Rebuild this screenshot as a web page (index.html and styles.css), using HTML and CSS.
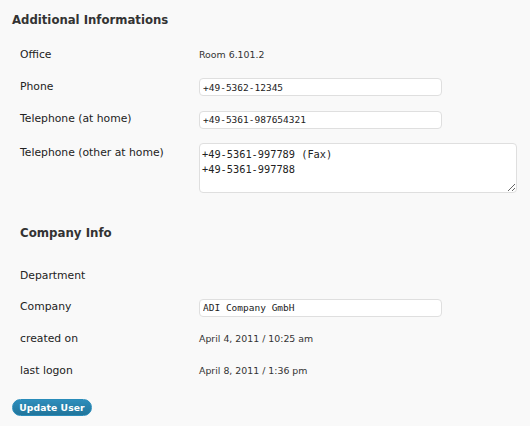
FILE: index.html
```html
<!DOCTYPE html>
<html>
<head>
<meta charset="utf-8">
<link rel="stylesheet" href="styles.css">
</head>
<body>
<div class="page">
  <h2 class="title">Additional Informations</h2>
  <div class="form">
    <div class="row r-office"><div class="label">Office</div><div class="value text">Room 6.101.2</div></div>
    <div class="row r-input"><div class="label">Phone</div><div class="value"><input class="field" type="text" value="+49-5362-12345"></div></div>
    <div class="row r-input"><div class="label">Telephone (at home)</div><div class="value"><input class="field" type="text" value="+49-5361-987654321"></div></div>
    <div class="row r-area"><div class="label">Telephone (other at home)</div><div class="value"><textarea class="area">+49-5361-997789 (Fax)
+49-5361-997788</textarea></div></div>
  </div>
  <h3 class="subtitle">Company Info</h3>
  <div class="form">
    <div class="row r-dept"><div class="label">Department</div><div class="value text"></div></div>
    <div class="row r-comp"><div class="label">Company</div><div class="value"><input class="field" type="text" value="ADI Company GmbH"></div></div>
    <div class="row r-created"><div class="label">created on</div><div class="value text">April 4, 2011 / 10:25 am</div></div>
    <div class="row r-logon"><div class="label">last logon</div><div class="value text">April 8, 2011 / 1:36 pm</div></div>
  </div>
  <div class="actions"><button class="btn" type="button">Update User</button></div>
</div>
</body>
</html>
```
FILE: styles.css
```css
html, body {
  margin: 0;
  padding: 0;
  background: #f9f9f9;
}
body {
  font-family: "DejaVu Sans", Verdana, sans-serif;
  color: #333;
  width: 530px;
  height: 426px;
  overflow: hidden;
}
.page {
  padding: 0 0 0 12px;
}
.title {
  margin: 0;
  height: 38px;
  line-height: 40px;
  font-size: 11.7px;
  font-weight: bold;
  color: #333;
}
.form {
  padding-left: 8px;
}
.row {
  display: grid;
  grid-template-columns: 179px 1fr;
  align-items: center;
}
.label {
  font-size: 10.8px;
  color: #222;
}
.value.text {
  font-size: 9.4px;
  color: #333;
}
.r-office { height: 32px; }
.r-input { height: 32px; }
.r-input + .r-input { height: 33px; }
.r-area {
  align-items: start;
  padding-top: 8px;
  padding-bottom: 8px;
}
.r-area .label { padding-top: 3px; }
.field {
  box-sizing: border-box;
  width: 243px;
  height: 18px;
  margin: 0;
  padding: 0 3px;
  border: 1px solid #dfdfdf;
  border-radius: 4px;
  background: #fff;
  font-family: "DejaVu Sans Mono", "Liberation Mono", monospace;
  font-size: 9.5px;
  color: #222;
  outline: none;
}
.area {
  box-sizing: border-box;
  display: block;
  width: 318px;
  height: 50px;
  margin: 0;
  padding: 3px 2px;
  border: 1px solid #dfdfdf;
  border-radius: 4px;
  background: #fff;
  font-family: "DejaVu Sans Mono", "Liberation Mono", monospace;
  font-size: 10.3px;
  line-height: 15px;
  color: #222;
  outline: none;
}
.subtitle {
  margin: 0;
  padding-left: 8px;
  height: 59px;
  line-height: 64px;
  font-size: 11.8px;
  font-weight: bold;
  color: #333;
}
.r-dept { height: 31px; }
.r-comp { height: 31px; }
.r-created { height: 33px; }
.r-logon { height: 31px; }
.actions {
  display: flex;
  padding-top: 13px;
}
.btn {
  box-sizing: border-box;
  height: 17px;
  width: 80px;
  padding: 0;
  border: 1px solid #298cba;
  border-radius: 9px;
  background: linear-gradient(to bottom, #2e8dbb, #21759b);
  color: #fff;
  font-family: "DejaVu Sans", Verdana, sans-serif;
  font-size: 9.2px;
  font-weight: bold;
  line-height: 15px;
  letter-spacing: 0.1px;
}
```
